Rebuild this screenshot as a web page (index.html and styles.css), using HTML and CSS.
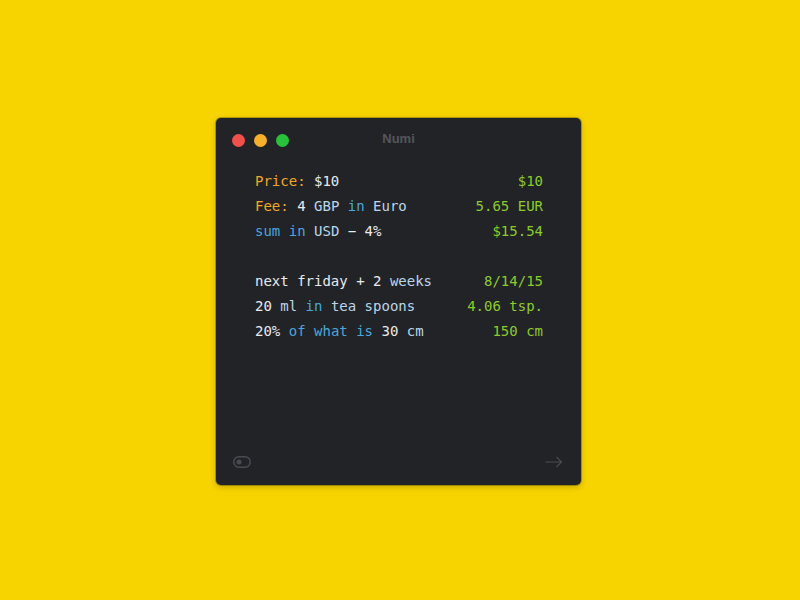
FILE: index.html
```html
<!DOCTYPE html>
<html lang="en">
<head>
  <meta charset="UTF-8" />
  <title>Numi</title>
  <link rel="stylesheet" href="styles.css">
</head>
<body>
  <div class="window">
    <div class="titlebar">
      <div class="lights">
        <span class="light red"></span>
        <span class="light yellow"></span>
        <span class="light green"></span>
      </div>
      <div class="title">Numi</div>
    </div>

    <div class="sheet">
      <div class="line">
        <div class="expr"><span class="label">Price:</span> <span class="num">$10</span></div>
        <div class="result">$10</div>
      </div>
      <div class="line">
        <div class="expr"><span class="label">Fee:</span> <span class="num">4</span> <span class="unit">GBP</span> <span class="kw">in</span> <span class="unit">Euro</span></div>
        <div class="result">5.65 EUR</div>
      </div>
      <div class="line">
        <div class="expr"><span class="kw">sum</span> <span class="kw">in</span> <span class="unit">USD</span> <span class="num">− 4%</span></div>
        <div class="result">$15.54</div>
      </div>
      <div class="line empty"></div>
      <div class="line">
        <div class="expr"><span class="num">next friday + 2</span> <span class="unit">weeks</span></div>
        <div class="result">8/14/15</div>
      </div>
      <div class="line">
        <div class="expr"><span class="num">20</span> <span class="unit">ml</span> <span class="kw">in</span> <span class="unit">tea spoons</span></div>
        <div class="result">4.06 tsp.</div>
      </div>
      <div class="line">
        <div class="expr"><span class="num">20%</span> <span class="kw">of what is</span> <span class="num">30</span> <span class="unit">cm</span></div>
        <div class="result">150 cm</div>
      </div>
    </div>

    <div class="footer">
      <svg class="icon" width="18" height="12" viewBox="0 0 18 12">
        <rect x="0.75" y="0.75" width="16.5" height="10.5" rx="5.25" fill="none" stroke="#4a4b50" stroke-width="1.5"/>
        <circle cx="6" cy="6" r="2.5" fill="#4a4b50"/>
      </svg>
      <svg class="icon" width="18" height="12" viewBox="0 0 18 12">
        <path d="M0.5 6 H16.5 M11.5 1 L16.5 6 L11.5 11" fill="none" stroke="#4a4b50" stroke-width="1.2"/>
      </svg>
    </div>
  </div>
</body>
</html>
```

FILE: styles.css
```css
body {
  margin: 0;
  width: 800px;
  height: 600px;
  background: #f7d300;
  display: flex;
  align-items: flex-start;
  padding: 118px 0 0 216px;
  box-sizing: border-box;
  overflow: hidden;
}

.window {
  width: 365px;
  height: 367px;
  background: #222327;
  border-radius: 5px;
  box-shadow: 0 0 0 1px rgba(0, 0, 0, 0.25), 0 2px 6px rgba(0, 0, 0, 0.2);
  display: flex;
  flex-direction: column;
}

.titlebar {
  height: 44px;
  position: relative;
  display: flex;
  align-items: center;
  justify-content: center;
}

.lights {
  position: absolute;
  left: 16px;
  top: 16px;
  display: flex;
  gap: 9px;
}

.light {
  width: 13px;
  height: 13px;
  border-radius: 50%;
}

.light.red { background: #f2504b; }
.light.yellow { background: #f6b02b; }
.light.green { background: #27c13c; }

.title {
  font-family: "Liberation Sans", Arial, sans-serif;
  font-weight: bold;
  font-size: 13px;
  color: #55565b;
  margin-top: -3px;
}

.sheet {
  flex: 1;
  padding: 7px 38px 0 39px;
  font-family: "DejaVu Sans Mono", monospace;
  font-size: 14px;
  line-height: 25px;
}

.line {
  display: flex;
  justify-content: space-between;
  height: 25px;
  white-space: pre;
}

.label { color: #f5a623; }
.num { color: #e8eaee; }
.unit { color: #bcd5e9; }
.kw { color: #4aa6dc; }
.result { color: #8ccb2c; }

.footer {
  display: flex;
  justify-content: space-between;
  align-items: flex-end;
  padding: 0 18px 17px 17px;
}

.icon {
  display: block;
}
```
